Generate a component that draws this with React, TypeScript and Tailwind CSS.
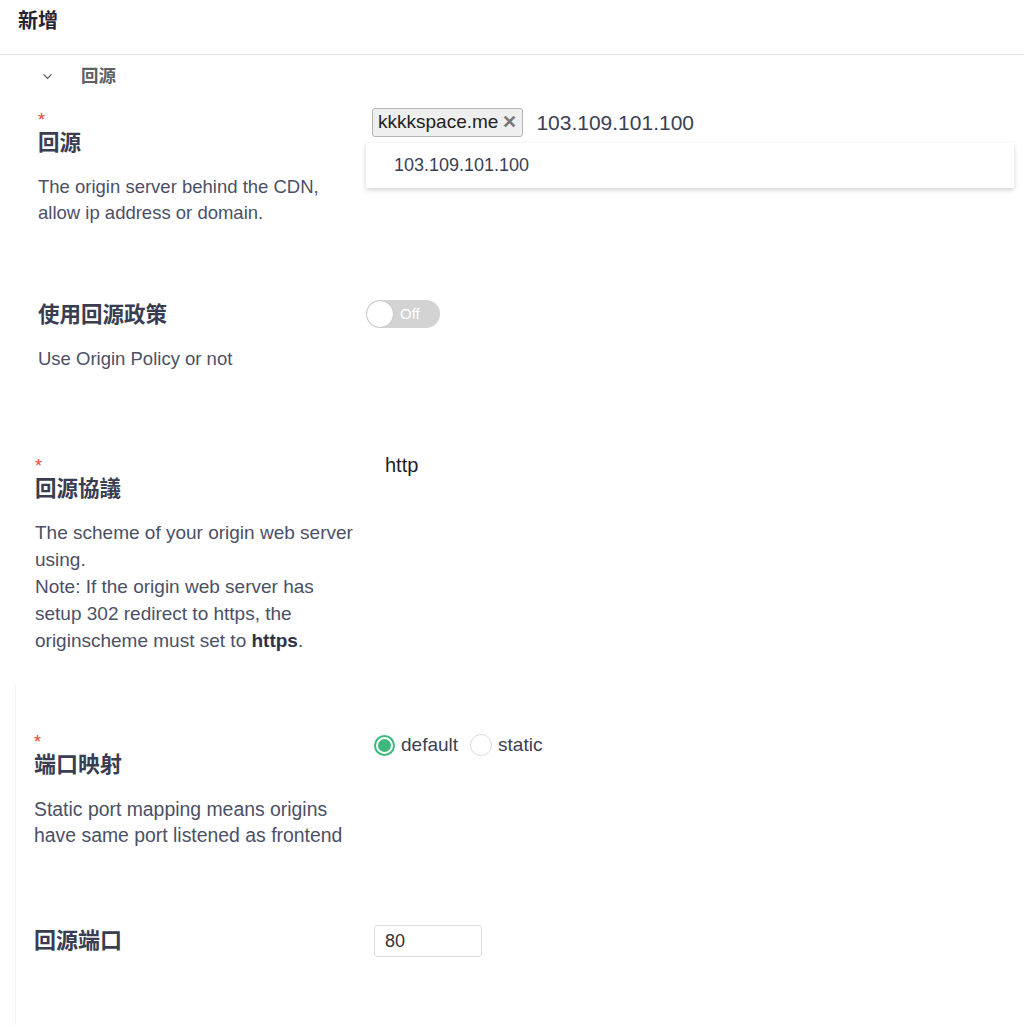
import { ChevronDown } from 'lucide-react';

const font = { fontFamily: '"Liberation Sans", "Noto Sans CJK TC", sans-serif' };

const Star = () => <div className="h-[20px] pt-[1px] text-[18px] leading-[19px] text-[#e8482e]">*</div>;

const Label = ({ children, size = 'text-[21.5px]' }: { children: React.ReactNode; size?: string }) => (
  <div className={`${size} leading-[26px] font-bold text-[#383d52]`}>{children}</div>
);

export default function App() {
  return (
    <div className="h-[1025px] overflow-hidden bg-white text-[#4b5066]" style={font}>
      <div className="h-[55px] border-b border-[#e3e3e3] pl-[18px] pt-[8px]">
        <h1 className="text-[20px] leading-[26px] font-bold text-[#1f2332]">新增</h1>
      </div>

      <div className="flex items-center h-[42px] pl-[40px] text-[#5a5a5a]">
        <ChevronDown size={15} strokeWidth={2} className="mt-[1px]" />
        <span className="ml-[26px] text-[17.5px] font-bold text-[#5f5f66]">回源</span>
      </div>

      {/* origin */}
      <div className="flex pt-[13px] h-[185px]">
        <div className="w-[366px] shrink-0 pl-[38px]">
          <Star />
          <Label>回源</Label>
          <p className="mt-[18px] text-[18.5px] leading-[26px]">
            The origin server behind the CDN,
            <br />
            allow ip address or domain.
          </p>
        </div>
        <div className="relative flex-1 -mt-[2px]">
          <div className="flex items-center h-[29px] pl-[6px]">
            <span className="flex items-center h-[29px] px-[5px] rounded-[3px] border border-[#b5b5b5] bg-[#efefef] text-[19px] text-[#222]">
              kkkkspace.me
              <span className="ml-[4px] text-[18px] font-bold text-[#777]">✕</span>
            </span>
            <span className="ml-[13px] text-[21px] text-[#3b4055]">103.109.101.100</span>
          </div>
          <div className="absolute left-0 right-[10px] top-[35px] h-[45px] bg-white shadow-[0_2px_5px_rgba(0,0,0,0.18)] flex items-center pl-[28px] text-[18px] text-[#3b4055]">
            103.109.101.100
          </div>
        </div>
      </div>

      {/* origin policy */}
      <div className="flex h-[174px] pt-[20px]">
        <div className="w-[366px] shrink-0 pl-[38px]">
          <Label>使用回源政策</Label>
          <p className="mt-[18px] text-[18.5px] leading-[26px]">Use Origin Policy or not</p>
        </div>
        <div className="flex-1">
          <div className="flex items-center w-[74px] h-[28px] rounded-full bg-[#d3d3d3] -mt-[2px]">
            <span className="ml-[1px] w-[26px] h-[26px] rounded-full bg-white shadow-[0_0_1px_rgba(0,0,0,0.3)]" />
            <span className="ml-[7px] text-[15px] text-white">Off</span>
          </div>
        </div>
      </div>

      {/* scheme */}
      <div className="flex h-[229px]">
        <div className="w-[373px] shrink-0 pl-[35px]">
          <Star />
          <Label>回源協議</Label>
          <p className="mt-[17px] text-[19px] leading-[27px] whitespace-nowrap">
            The scheme of your origin web server
            <br />
            using.
            <br />
            Note: If the origin web server has
            <br />
            setup 302 redirect to https, the
            <br />
            originscheme must set to <b className="text-[#2e3246]">https</b>.
          </p>
        </div>
        <div className="flex-1 pl-[12px] -mt-[1px] text-[20px] leading-[20px] text-[#1d1d1d]">http</div>
      </div>

      <div className="ml-[15px] border-l border-[#f3f3f3]">
        {/* port mapping */}
        <div className="flex h-[243px] pt-[47px]">
          <div className="w-[358px] shrink-0 pl-[18px]">
            <Star />
            <Label size="text-[22px]">端口映射</Label>
            <p className="mt-[18px] text-[19.4px] leading-[26px] whitespace-nowrap">
              Static port mapping means origins
              <br />
              have same port listened as frontend
            </p>
          </div>
          <div className="flex-1 flex items-center h-[26px] text-[19px] text-[#3b4055]">
            <span className="flex items-center justify-center w-[21px] h-[21px] rounded-full border-[2px] border-[#3bb87a]">
              <span className="w-[13px] h-[13px] rounded-full bg-[#3bb87a]" />
            </span>
            <span className="ml-[6px]">default</span>
            <span className="ml-[12px] w-[22px] h-[22px] rounded-full border border-[#dcdce0]" />
            <span className="ml-[6px]">static</span>
          </div>
        </div>

        {/* port */}
        <div className="flex h-[100px]">
          <div className="w-[358px] shrink-0 pl-[18px]">
            <Label size="text-[22px]">回源端口</Label>
          </div>
          <div className="flex-1 -mt-[3px]">
            <div className="w-[108px] h-[32px] rounded-[3px] border border-[#dcdce2] flex items-center pl-[10px] text-[18px] text-[#333]">
              80
            </div>
          </div>
        </div>
      </div>
    </div>
  );
}
